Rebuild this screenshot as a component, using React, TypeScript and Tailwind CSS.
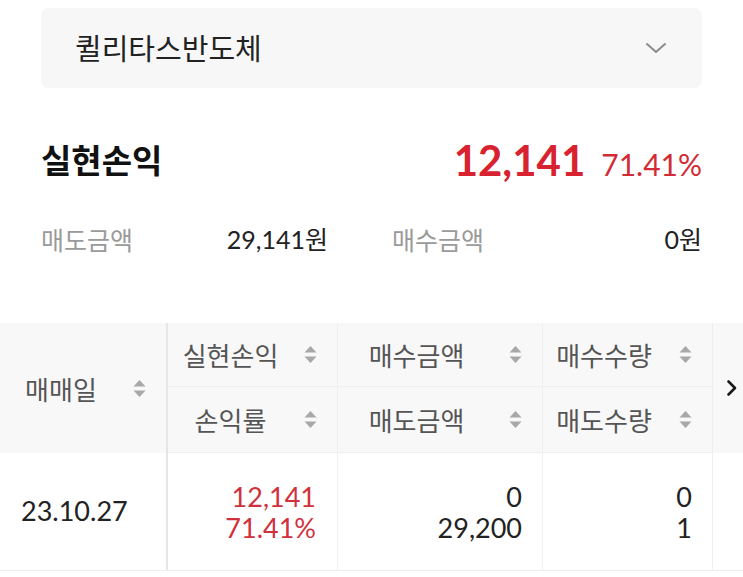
import React from "react";

const KR = "font-['Lato','Noto_Sans_CJK_KR',sans-serif]";

function SortIcon() {
  return (
    <svg width="13" height="19" viewBox="0 0 13 19" className="shrink-0">
      <path d="M6.5 1 L12.5 7.5 L0.5 7.5 Z" fill="#a8a8a8" />
      <path d="M0.5 11.5 L12.5 11.5 L6.5 18 Z" fill="#a8a8a8" />
    </svg>
  );
}

function HeadCell({ label, gap = "gap-[11px]" }: { label: string; gap?: string }) {
  return (
    <div className={`flex items-center pr-[20px] ${gap}`}>
      <span className="flex-1 text-center text-[26px] text-[#555] font-['Noto_Sans_CJK_KR',sans-serif]">{label}</span>
      <SortIcon />
    </div>
  );
}

export default function App() {
  return (
    <div className={`w-[743px] h-[577px] bg-white overflow-hidden ${KR}`}>
      <div className="px-[41px] pt-[8px]">
        <div className="h-[80px] rounded-[8px] bg-[#f7f7f7] flex items-center pl-[34px] pr-[35px]">
          <span className="flex-1 text-[29px] text-[#222] font-['Noto_Sans_CJK_KR',sans-serif]">퀼리타스반도체</span>
          <svg width="22" height="12" viewBox="0 0 22 12">
            <path d="M2 2 L11 10 L20 2" fill="none" stroke="#8a8a8a" strokeWidth="2" strokeLinecap="round" />
          </svg>
        </div>

        <div className="flex items-center justify-between mt-[44px] h-[56px]">
          <span className="text-[33px] font-bold text-[#111] font-['Noto_Sans_CJK_KR',sans-serif]">실현손익</span>
          <div className="flex items-baseline gap-[16px] text-[#d8222f]">
            <span className="font-['Lato',sans-serif] font-bold text-[42px] leading-none">12,141</span>
            <span className="font-['Lato',sans-serif] text-[30px] leading-none text-[#d32b36]">71.41%</span>
          </div>
        </div>

        <div className="flex items-center mt-[35px] h-[34px] text-[25px]">
          <div className="w-[287px] flex justify-between">
            <span className="text-[#9a9a9a] font-['Noto_Sans_CJK_KR',sans-serif]">매도금액</span>
            <span className="text-[#222]">29,141원</span>
          </div>
          <div className="flex-1 flex justify-between pl-[64px]">
            <span className="text-[#9a9a9a] font-['Noto_Sans_CJK_KR',sans-serif]">매수금액</span>
            <span className="text-[#222]">0원</span>
          </div>
        </div>
      </div>

      <div className="mt-[66px] grid grid-cols-[168px_170px_205px_170px_30px] border-b border-[#eeeeee]">
        <div className="row-span-2 bg-[#f8f8f8] border-r-2 border-[#e6e6e6] flex items-center pr-[20px] gap-[11px]">
          <span className="flex-1 text-center text-[26px] text-[#555] font-['Noto_Sans_CJK_KR',sans-serif]">매매일</span>
          <SortIcon />
        </div>
        <div className="h-[64px] bg-[#f8f8f8] border-r border-b border-[#efefef] grid">
          <HeadCell label="실현손익" />
        </div>
        <div className="h-[64px] bg-[#f8f8f8] border-r border-b border-[#efefef] grid">
          <HeadCell label="매수금액" gap="gap-[14px]" />
        </div>
        <div className="h-[64px] bg-[#f8f8f8] border-r border-b border-[#efefef] grid">
          <HeadCell label="매수수량" gap="gap-[14px]" />
        </div>
        <div className="row-span-2 bg-[#f8f8f8] flex items-center justify-center pl-[8px]">
          <svg width="12" height="18" viewBox="0 0 12 18">
            <path d="M2.5 2.5 L9 9 L2.5 15.5" fill="none" stroke="#1a1a1a" strokeWidth="2.6" strokeLinecap="round" strokeLinejoin="round" />
          </svg>
        </div>
        <div className="h-[66px] bg-[#f8f8f8] border-r border-b border-[#efefef] grid">
          <HeadCell label="손익률" />
        </div>
        <div className="h-[66px] bg-[#f8f8f8] border-r border-b border-[#efefef] grid">
          <HeadCell label="매도금액" gap="gap-[14px]" />
        </div>
        <div className="h-[66px] bg-[#f8f8f8] border-r border-b border-[#efefef] grid">
          <HeadCell label="매도수량" gap="gap-[14px]" />
        </div>

        <div className="h-[117px] border-r-2 border-[#e6e6e6] flex items-center pl-[21px] text-[27px] text-[#222] font-['Lato',sans-serif]">
          23.10.27
        </div>
        <div className="h-[117px] border-r border-[#efefef] flex flex-col justify-center items-end pr-[21px] text-[27px] leading-[31px] text-[#d0313c] font-['Lato',sans-serif]">
          <span>12,141</span>
          <span>71.41%</span>
        </div>
        <div className="h-[117px] border-r border-[#efefef] flex flex-col justify-center items-end pr-[20px] text-[27px] leading-[31px] text-[#222] font-['Lato',sans-serif]">
          <span>0</span>
          <span>29,200</span>
        </div>
        <div className="h-[117px] border-r border-[#efefef] flex flex-col justify-center items-end pr-[20px] text-[27px] leading-[31px] text-[#222] font-['Lato',sans-serif]">
          <span>0</span>
          <span>1</span>
        </div>
        <div className="h-[117px]" />
      </div>
    </div>
  );
}
